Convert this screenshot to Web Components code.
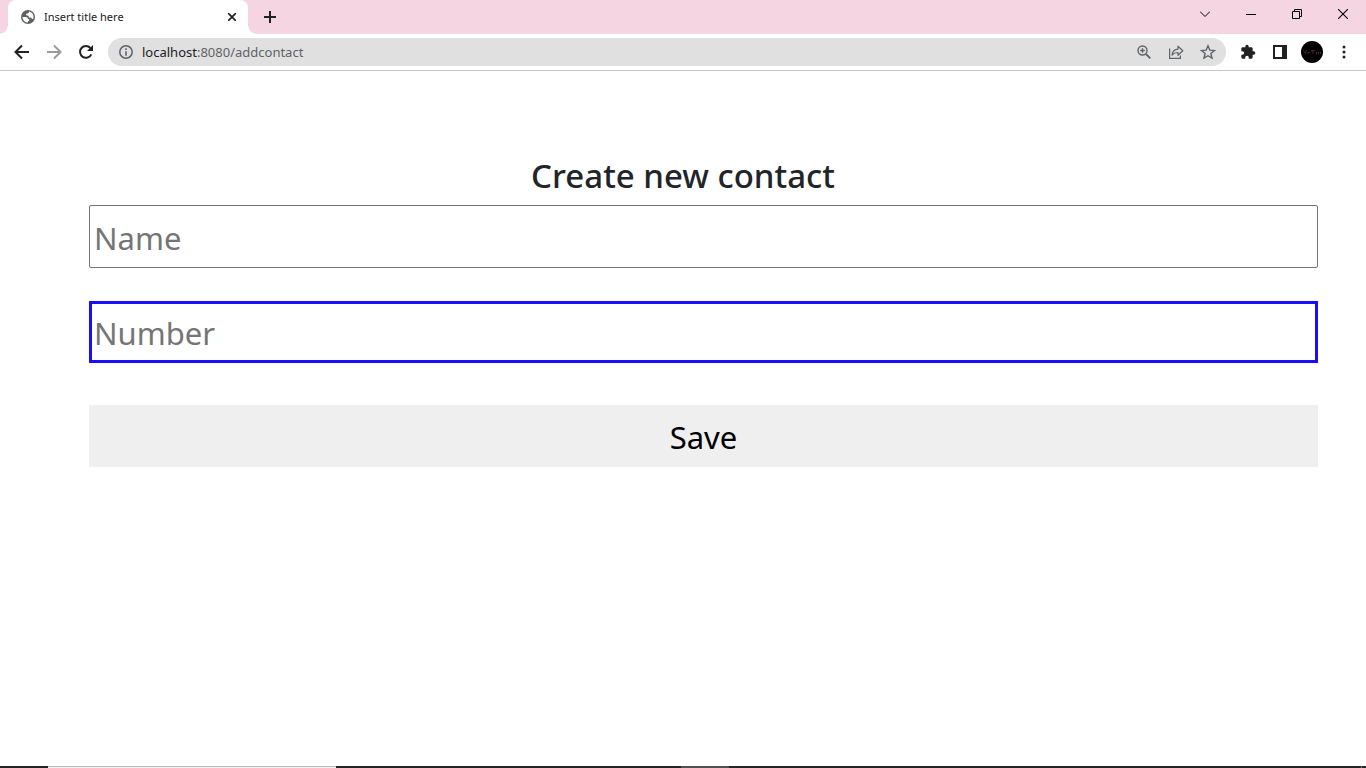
<!DOCTYPE html>
<html lang="en">
<head>
<meta charset="utf-8">
<title>Insert title here</title>
<style>
html, body { margin: 0; height: 100%; }
body { background: #fff; font-family: "Noto Sans", "Open Sans", sans-serif; color: #212529; }
</style>
</head>
<body>
<browser-window>
  <tab-strip slot="chrome"><browser-tab>Insert title here</browser-tab></tab-strip>
  <address-bar slot="chrome" host="localhost" path=":8080/addcontact"></address-bar>
  <contact-form>Create new contact</contact-form>
  <task-bar slot="taskbar"></task-bar>
</browser-window>
<script>
const define = (name, html, setup) => customElements.define(name, class extends HTMLElement {
  constructor() {
    super();
    this.attachShadow({ mode: "open" }).innerHTML = html;
  }
  connectedCallback() { if (setup) setup(this, this.shadowRoot); }
});

const iconButton = `
  button { display: flex; align-items: center; justify-content: center; padding: 0; border: 0; background: none; color: inherit; flex: none; }
  svg { display: block; flex: none; }`;

define("browser-window", `
<style>
  :host { display: flex; flex-direction: column; min-height: 100vh; }
  main { flex: 1; }
</style>
<header><slot name="chrome"></slot></header>
<main><slot></slot></main>
<slot name="taskbar"></slot>`);

define("tab-strip", `
<style>
  :host { display: flex; height: 34px; background: #f6d5e3; color: #202124; padding-left: 8px; }
  ${iconButton}
  .new { width: 28px; height: 34px; margin-left: 8px; }
  .window { display: flex; margin-left: auto; }
  .window button { width: 46px; height: 28px; color: #000; }
</style>
<slot></slot>
<button class="new" aria-label="New tab"><svg width="12" height="12" viewBox="0 0 12 12" fill="none" stroke="currentColor" stroke-width="2"><path d="M6 0v12M0 6h12"/></svg></button>
<div class="window">
  <button aria-label="Search tabs"><svg width="10" height="6" viewBox="0 0 10 6" fill="none" stroke="currentColor"><path d="M0 .5l5 5 5-5"/></svg></button>
  <button aria-label="Minimize"><svg width="10" height="1" viewBox="0 0 10 1"><path fill="currentColor" d="M0 0h10v1H0z"/></svg></button>
  <button aria-label="Restore"><svg width="10" height="10" viewBox="0 0 10 10" fill="none" stroke="currentColor"><path d="M.5 2.500h7v7h-7zM2.500 2.500v-2h7v7h-2"/></svg></button>
  <button aria-label="Close window"><svg width="10" height="10" viewBox="0 0 10 10" fill="none" stroke="currentColor" stroke-width="1.100"><path d="M0 0l10 10M10 0L0 10"/></svg></button>
</div>`);

define("browser-tab", `
<style>
  :host { position: relative; display: flex; align-items: center; gap: 8px; box-sizing: border-box; width: 240px; height: 34px; padding: 0 8px 0 12px; border-radius: 8px 8px 0 0; background: #fff; font-size: 11px; line-height: 16px; }
  :host::before, :host::after { content: ""; position: absolute; bottom: 0; width: 8px; height: 8px; }
  :host::before { right: 100%; background: radial-gradient(circle at 0 0, transparent 7px, #fff 8px); }
  :host::after { left: 100%; background: radial-gradient(circle at 100% 0, transparent 7px, #fff 8px); }
  span { flex: 1; }
  ${iconButton}
  button { width: 16px; height: 16px; }
</style>
<svg width="16" height="16" viewBox="0 0 16 16"><circle cx="8" cy="8" r="7" fill="#5f6368"/><path fill="#fff" d="M9.200 2.600c2.500.5 4.300 2.700 4.300 5.300 0 .8-.2 1.500-.4 2.100-.6.100-1.200-.1-1.500-.7-.3-.7-.9-.9-1.600-.7-1 .2-1.300-.4-1.300-1.100 0-.8-.7-1-1.600-1C6.300 6.500 6 6 6.100 5.300c.1-.8.7-.9 1.500-.9S8.800 3.900 9.200 2.600z"/><path fill="#fff" d="M2.500 8h3c1.500 0 2.500.8 2.500 2.100.8 0 1.300.3 1.300.9 0 .8-.6 1-1.300 1v1.500A5.500 5.500 0 0 1 2.500 8z"/></svg>
<span><slot></slot></span>
<button aria-label="Close tab"><svg width="8" height="8" viewBox="0 0 8 8" fill="none" stroke="currentColor" stroke-width="1.700"><path d="M0 0l8 8M8 0l-8 8"/></svg></button>`);

define("address-bar", `
<style>
  :host { display: flex; align-items: center; box-sizing: border-box; height: 37px; padding: 0 6px; border-bottom: 1px solid #c8c8c8; background: #fff; color: #202124; }
  ${iconButton}
  button { width: 32px; height: 28px; }
  .off { color: #9b9b9d; }
  .box { display: flex; align-items: center; flex: 1; height: 28px; margin: 0 6px; border-radius: 14px; background: #e0e0e0; color: #5f6368; }
  .info { width: 34px; padding-left: 2px; }
  .url { flex: 1; font-size: 13px; line-height: 20px; }
  b { font-weight: 400; color: #202124; }
  .box button:last-child { margin-right: 2px; }
  .avatar { width: 22px; height: 22px; border-radius: 50%; background: #000; }
  .dots { width: 32px; }
</style>
<button aria-label="Back"><svg width="16" height="16" viewBox="0 0 16 16" fill="none" stroke="currentColor" stroke-width="2"><path d="M15 8H2M8 1.500L1.500 8 8 14.500"/></svg></button>
<button aria-label="Forward" class="off"><svg width="16" height="16" viewBox="0 0 16 16" fill="none" stroke="currentColor" stroke-width="2"><path d="M1 8h13M8 1.500l6.500 6.500L8 14.500"/></svg></button>
<button aria-label="Reload"><svg width="16" height="16" viewBox="0 0 16 16"><path d="M13.300 10.300A5.900 5.900 0 1 1 12.400 4" fill="none" stroke="currentColor" stroke-width="2"/><path d="M15 1v6H9z" fill="currentColor"/></svg></button>
<div class="box">
  <button class="info" aria-label="Site information"><svg width="16" height="16" viewBox="0 0 16 16"><circle cx="8" cy="8" r="6.200" fill="none" stroke="currentColor" stroke-width="1.500"/><path d="M7.200 4.300h1.600v1.600H7.200zM7.200 7.200h1.600v4.500H7.200z" fill="currentColor"/></svg></button>
  <span class="url"><b></b><span class="path"></span></span>
  <button aria-label="Zoom"><svg width="16" height="16" viewBox="0 0 16 16" fill="none" stroke="currentColor" stroke-width="1.400"><circle cx="6.500" cy="6.500" r="4.500"/><path d="M10 10l4.300 4.300" stroke-width="1.800"/><path d="M4.200 6.500h4.600M6.500 4.200v4.600"/></svg></button>
  <button aria-label="Share"><svg width="16" height="16" viewBox="0 0 16 16" fill="none" stroke="currentColor" stroke-width="1.200"><path d="M1.600 4.500v9.900h10.800v-3"/><path d="M4 11c.5-3.800 2.600-5.700 6-5.900V2.200l4.800 4.600L10 11.300V8.500C7.300 8.500 5.500 9.200 4 11z" stroke-linejoin="round"/></svg></button>
  <button aria-label="Bookmark"><svg width="16" height="16" viewBox="0 0 16 16" fill="none" stroke="currentColor" stroke-width="1.400"><path d="M8 1.800l1.800 4.300 4.700.4-3.600 3 1.100 4.600L8 11.700l-4 2.400 1.100-4.600-3.600-3 4.700-.4z"/></svg></button>
</div>
<button aria-label="Extensions"><svg width="16" height="16" viewBox="0 0 24 24" fill="currentColor"><path d="M20.500 11H19V7c0-1.100-.9-2-2-2h-4V3.500a2.500 2.500 0 0 0-5 0V5H4c-1.100 0-2 .9-2 2v3.800h1.500a2.700 2.700 0 0 1 0 5.400H2V20c0 1.100.9 2 2 2h3.800v-1.500a2.700 2.700 0 0 1 5.400 0V22H17c1.100 0 2-.9 2-2v-4h1.500a2.500 2.500 0 0 0 0-5z"/></svg></button>
<button aria-label="Side panel"><svg width="14" height="14" viewBox="0 0 14 14"><path fill="none" stroke="currentColor" stroke-width="2" d="M1 1h12v12H1z"/><path fill="currentColor" d="M9 0h5v14H9z"/></svg></button>
<button aria-label="Profile"><svg class="avatar" width="22" height="22" viewBox="0 0 22 22"><path fill="none" stroke="#5a221c" d="M2.500 9.500l2 3 1-3M6.500 11.500h2M10 9.500h4M12 9.500v3.500M15.500 11v2.500M17.500 11v2M19.500 11v2"/></svg></button>
<button class="dots" aria-label="Menu"><svg width="4" height="14" viewBox="0 0 4 14" fill="currentColor"><circle cx="2" cy="2" r="1.500"/><circle cx="2" cy="7" r="1.500"/><circle cx="2" cy="12" r="1.500"/></svg></button>`,
(host, root) => {
  root.querySelector("b").textContent = host.getAttribute("host");
  root.querySelector(".path").textContent = host.getAttribute("path");
});

define("contact-form", `
<style>
  :host { display: block; padding-top: 78px; }
  h1 { margin: 0; padding-bottom: 2px; font-size: 33px; line-height: 54px; font-weight: 500; text-align: center; }
  form { display: flex; flex-direction: column; margin: 0 48px 0 89px; }
  input, button { box-sizing: border-box; width: 100%; height: 62px; font: 400 31px/46px "Noto Sans", "Open Sans", sans-serif; }
  input { height: 63px; margin: 0 0 33px; padding: 2px 4px 0; border: 1px solid #767676; border-radius: 2px; background: #fff; color: #212529; outline: 0; }
  input::placeholder { color: #757575; opacity: 1; }
  .active { height: 62px; margin-bottom: 42px; padding: 2px 2px 0; border: 3px solid #1a0dff; border-radius: 0; }
  button { padding: 2px 0 0; border: 0; background: #efefef; color: #000; }
</style>
<h1><slot></slot></h1>
<form>
  <input type="text" aria-label="Name" placeholder="Name">
  <input class="active" type="text" aria-label="Number" placeholder="Number">
  <button type="button">Save</button>
</form>`);

define("task-bar", `
<style>
  :host { display: flex; height: 2px; background: #242528; }
  .search { box-sizing: border-box; width: 288px; margin-left: 48px; border-top: 1px solid #bbb; background: #f0f0f0; }
  .app { width: 48px; margin-left: 345px; background: #505153; }
  .edge { width: 1px; margin: 0 4px 0 auto; background: #777; }
</style>
<div class="search"></div><div class="app"></div><div class="edge"></div>`);
</script>
</body>
</html>
